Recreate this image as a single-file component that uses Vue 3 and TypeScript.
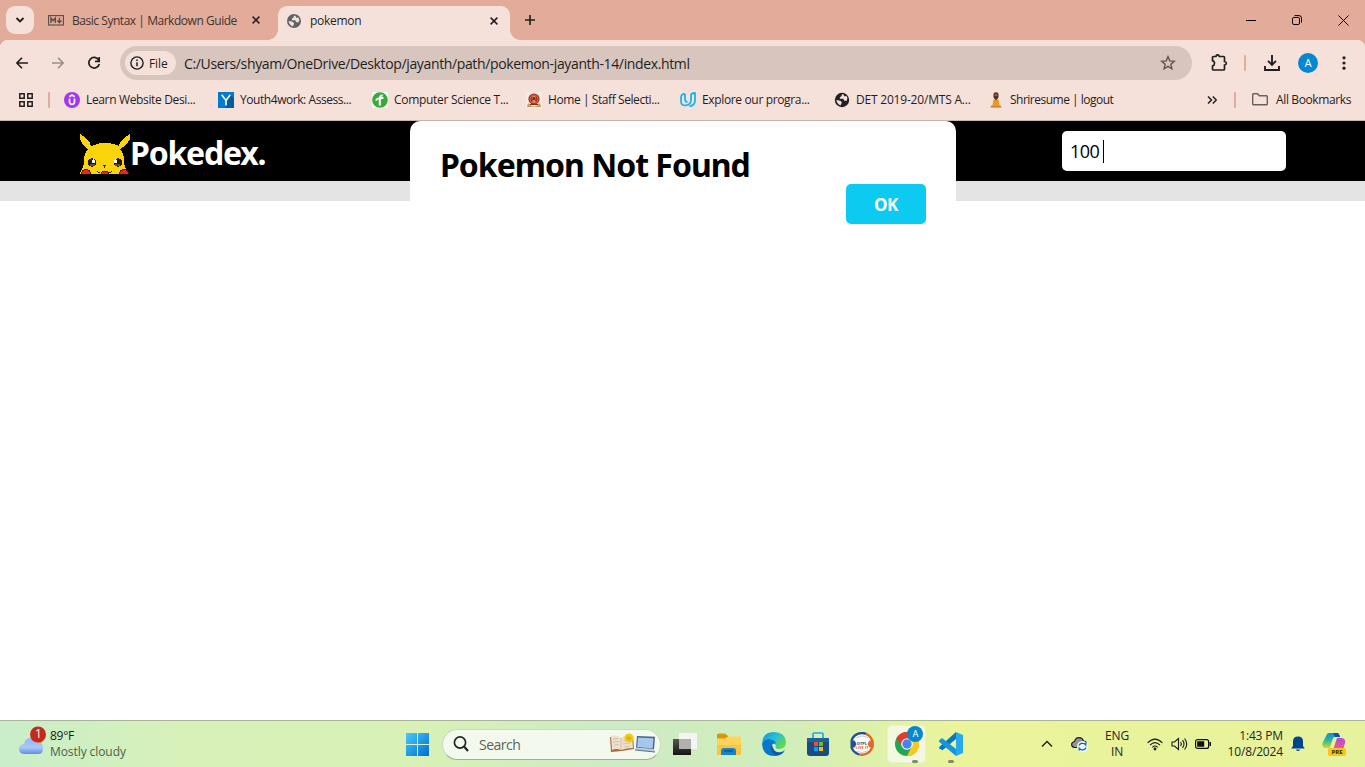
<script setup lang="ts">
interface Bookmark {
  icon: string
  label: string
}

const bookmarks: Bookmark[] = [
  { icon: 'udemy', label: 'Learn Website Desi...' },
  { icon: 'youth', label: 'Youth4work: Assess...' },
  { icon: 'science', label: 'Computer Science T...' },
  { icon: 'staff', label: 'Home | Staff Selecti...' },
  { icon: 'udacity', label: 'Explore our progra...' },
  { icon: 'globe', label: 'DET 2019-20/MTS A...' },
  { icon: 'shri', label: 'Shriresume | logout' },
]
</script>

<template>
  <div class="screen">
    <header class="tabs">
      <button class="tab-search">
        <svg width="10" height="8" viewBox="0 0 10 8"><path d="M1.5 2l3.5 3.5L8.500 2" fill="none" stroke="#1f1f1f" stroke-width="1.8" /></svg>
      </button>
      <div class="tab idle">
        <svg width="16" height="11" viewBox="0 0 16 11">
          <rect x=".6" y=".6" width="14.800" height="9.400" fill="none" stroke="#5a4b47" stroke-width="1.1" />
          <path d="M3 8V3l2.200 2.600L7.400 3v5M11.400 2.800v4.600M9.400 5.500l2 2.200 2-2.200" fill="none" stroke="#5a4b47" stroke-width="1.4" />
        </svg>
        <span class="tab-text t1">Basic Syntax | Markdown Guide</span>
        <svg class="x x1" width="8" height="8" viewBox="0 0 8 8"><path d="M.6.6l6.800 6.800M7.400.6L.6 7.400" stroke="#1f1f1f" stroke-width="1.500" /></svg>
      </div>
      <div class="tab active">
        <svg width="14" height="14" viewBox="0 0 14 14">
          <circle cx="7" cy="7" r="7" fill="#5f6368" />
          <path d="M8.200 1.600Q6 2 6.600 3.600L4.800 4.800v1.400h3.400l1.200 2h2.200q1.400-3-.4-5L9.500 4zM1.600 7l4 .8 1.600 1.600-1.400 3Q2 11 1.600 7z" fill="#f6e0da" />
        </svg>
        <span class="tab-text t2">pokemon</span>
        <svg class="x x2" width="8" height="8" viewBox="0 0 8 8"><path d="M.6.6l6.800 6.800M7.400.6L.6 7.400" stroke="#1f1f1f" stroke-width="1.500" /></svg>
      </div>
      <svg class="plus" width="10" height="10" viewBox="0 0 10 10"><path d="M0 5h10M5 0v10" stroke="#1f1f1f" stroke-width="1.600" /></svg>
      <div class="window-buttons">
        <span><svg width="10" height="10" viewBox="0 0 10 10"><path d="M0 5.500h10" stroke="#000" /></svg></span>
        <span><svg width="10" height="10" viewBox="0 0 10 10"><g fill="none" stroke="#000"><rect x=".5" y="2.500" width="7" height="7" rx="1.400" /><path d="M2.500.6h4.500q2.500 0 2.500 2.500v4.500" /></g></svg></span>
        <span><svg width="11" height="11" viewBox="0 0 11 11"><path d="M.5.5l10 10M10.500.5l-10 10" stroke="#000" /></svg></span>
      </div>
    </header>

    <div class="toolbar">
      <svg class="back" width="12" height="12" viewBox="0 0 12 12"><path d="M6 .8L.9 6 6 11.200M1 6h11" fill="none" stroke="#1f1f1f" stroke-width="1.600" /></svg>
      <svg class="forward" width="12" height="12" viewBox="0 0 12 12"><path d="M6 .8L11.100 6 6 11.200M11 6H0" fill="none" stroke="#998d89" stroke-width="1.600" /></svg>
      <svg class="reload" width="14" height="14" viewBox="0 0 14 14"><path d="M11.700 4A5.300 5.300 0 1 0 12.300 8M12.200 1v4.300H8" fill="none" stroke="#1f1f1f" stroke-width="1.700" /></svg>
      <div class="omnibox">
        <div class="file-chip">
          <svg width="14" height="14" viewBox="0 0 14 14"><circle cx="7" cy="7" r="6.100" fill="none" stroke="#1f1f1f" stroke-width="1.400" /><path d="M7 6.200v4M7 3.500v1.500" stroke="#1f1f1f" stroke-width="1.500" /></svg>
          <span>File</span>
        </div>
        <span class="url">C:/Users/shyam/OneDrive/Desktop/jayanth/path/pokemon-jayanth-14/index.html</span>
        <svg class="star" width="16" height="16" viewBox="0 0 16 16"><path d="M8 1.700l1.800 4.200 4.500.4-3.400 3 1 4.500L8 11.400l-3.900 2.400 1-4.500-3.400-3 4.500-.4z" fill="none" stroke="#5d5552" stroke-width="1.400" /></svg>
      </div>
      <svg class="puzzle" width="18" height="18" viewBox="0 0 18 18"><path d="M2.500 3.500q0-1 1-1H6q.2-1.700 1.600-1.700T9.300 2.500h4.200q1 0 1 1v4q1.800.2 1.800 1.700T14.500 11v4q0 1-1 1h-10q-1 0-1-1v-3q2-.5 2-2.700t-2-2.600z" fill="none" stroke="#1f1f1f" stroke-width="1.700" /></svg>
      <i class="divider first" />
      <svg class="download" width="16" height="16" viewBox="0 0 16 16"><path d="M8 0v9.500M4 5.800l4 4 4-4M1 11v4h14v-4" fill="none" stroke="#1f1f1f" stroke-width="1.900" /></svg>
      <span class="avatar">A</span>
      <svg class="more" width="4" height="14" viewBox="0 0 4 14"><g fill="#1f1f1f"><circle cx="2" cy="1.800" r="1.600" /><circle cx="2" cy="7" r="1.600" /><circle cx="2" cy="12.200" r="1.600" /></g></svg>
    </div>

    <nav class="bookmarks">
      <svg class="apps" width="14" height="14" viewBox="0 0 14 14"><path d="M.8.8h4.400v4.400H.8zM8.800.8h4.400v4.400H8.800zM.8 8.800h4.400v4.400H.8zM8.800 8.800h4.400v4.400H8.800z" fill="none" stroke="#1f1f1f" stroke-width="1.500" /></svg>
      <i class="divider bar" />
      <div v-for="b in bookmarks" :key="b.icon" class="bookmark">
        <svg width="16" height="16" viewBox="0 0 16 16">
          <template v-if="b.icon === 'udemy'"><circle cx="8" cy="8" r="8" fill="#a435f0" /><path d="M5.200 4.700L8 3l2.800 1.700M5.500 6.500v3.200q0 2.600 2.500 2.600t2.500-2.600V6.500" fill="none" stroke="#fff" stroke-width="1.700" /></template>
          <template v-else-if="b.icon === 'youth'"><path d="M0 0h16v16H0z" fill="#007ad0" /><path d="M12.500 2.500L16 6v10H7.500V13z" fill="#075b9a" /><path d="M3.700 2.800L8 8.500l4.300-5.700M8 8v5.500" fill="none" stroke="#fff" stroke-width="1.600" /></template>
          <template v-else-if="b.icon === 'science'"><path d="M0 0h16v16H0z" fill="#f9f4ef" /><circle cx="8" cy="8" r="7.800" fill="#38aa3d" /><path d="M4 8.500q1-2.700 7.500-2.500M10.800 3.500Q7.800 3 7.800 7v6.500" fill="none" stroke="#fff" stroke-width="2" /></template>
          <template v-else-if="b.icon === 'staff'"><path d="M0 0h16v16H0z" fill="#f7eadf" /><path d="M2 11q6 7 12 0l1 4H1z" fill="#b2a05a" /><circle cx="8" cy="7" r="5.600" fill="#b22a2c" /><circle cx="8" cy="7" r="4" fill="none" stroke="#c77d50" stroke-width=".8" /><path d="M6.500 4h3v2L9 9l1.500 1.500h-5L7 9l-.5-3z" fill="#d59855" /><path d="M7 5h2v3H7zM4 12h8v1H4z" fill="#8e2625" /></template>
          <template v-else-if="b.icon === 'udacity'"><path d="M5 1.900Q1 2 1 6v3q0 5 5 4.300Q11 12.600 11 8V3q0-1.700 4-2v7.500q0 5-5.500 5.800M5 1.900V7q0 2.800 2.500 3.200" fill="none" stroke="#16b5ea" stroke-width="1.800" stroke-linejoin="round" /></template>
          <template v-else-if="b.icon === 'globe'"><circle cx="8" cy="8" r="7.200" fill="#202124" /><path d="M9.200 2Q7 2.500 7.600 4L5.800 5.500v1.300h3.400l1.200 2h2.400q1.400-3-.4-5L10.500 4.500zM2.300 8l4 .8 1.600 1.600-1.400 3Q3 12 2.300 8z" fill="#f6e0da" /></template>
          <template v-else><path d="M5.500 7.500h5l1 5.500 2 1v1.300H2.500V14l2-1z" fill="#ed9820" /><path d="M5.500 3Q5.300.2 8 .2T10.500 3v2.500L8 8.500 5.500 5.500z" fill="#51322a" /><path d="M6.700 2.200h2.600v1.600H6.700z" fill="#ae674a" /><path d="M3 15h10" stroke="#8b7165" stroke-width=".8" /></template>
        </svg>
        <span :class="['label', b.icon]">{{ b.label }}</span>
      </div>
      <svg class="chevrons" width="10" height="8" viewBox="0 0 10 8"><path d="M1 .5L4.500 4 1 7.500M5.800.5L9.300 4 5.800 7.500" fill="none" stroke="#1f1f1f" stroke-width="1.500" /></svg>
      <i class="divider last" />
      <svg class="folder" width="16" height="13" viewBox="0 0 16 13"><path d="M.7 11V1.500q0-.8.8-.8h4l1.800 2h7.200q.8 0 .8.800V11q0 .8-.8.800h-13q-.8 0-.8-.8z" fill="none" stroke="#66605e" stroke-width="1.400" /></svg>
      <span class="all">All Bookmarks</span>
    </nav>

    <main class="page">
      <div class="navbar">
        <div class="brand">
          <svg width="50" height="40" viewBox="0 0 50 40" shape-rendering="crispEdges">
            <path d="M0 0l3 2 4 3 3 4 1 3 3-1 3-1 4-1h8l4 1 3 1 3 1 1-3 3-4 4-3 3-2v5l-3 5-4 3-3 2 2 3 2 5v6l1 4 2 4 1 3v1H0v-1l1-3 2-4 1-4v-6l2-5 2-3-3-2-3-4-2-4z" fill="#fbd40b" />
            <circle cx="12" cy="28.500" r="4.200" fill="#261a17" /><circle cx="38" cy="28.500" r="4.200" fill="#261a17" />
            <path d="M10 30h5v2h-5zM35 30h5v2h-5z" fill="#6d4c36" />
            <circle cx="13.600" cy="27.200" r="1.900" fill="#fff" /><circle cx="35.400" cy="27.200" r="1.900" fill="#fff" />
            <path d="M23 31h3v1h-1v2h-1v-2h-1zM17 37h1v1h2v1h-2v-1h-1zM31 37h1v1h-1v1h-2v-1h2z" fill="#222" />
            <circle cx="6" cy="40" r="5" fill="#4d1411" /><circle cx="44" cy="40" r="5" fill="#4d1411" />
            <circle cx="6" cy="40" r="4.300" fill="#eb2525" /><circle cx="44" cy="40" r="4.300" fill="#eb2525" />
            <ellipse cx="25" cy="40" rx="4.500" ry="3" fill="#4d1411" /><ellipse cx="25" cy="40" rx="3.600" ry="2.200" fill="#eb2525" />
          </svg>
          <h1>Pokedex.</h1>
        </div>
        <div class="search-input"><span>100</span><i class="caret" /></div>
      </div>
      <div class="strip" />
      <section class="dialog">
        <h2>Pokemon Not Found</h2>
        <button>OK</button>
      </section>
    </main>

    <footer class="taskbar">
      <div class="weather">
        <svg width="32" height="32" viewBox="0 0 32 32">
          <defs><linearGradient id="cloud" x2="0" y2="1"><stop stop-color="#93b9f7" /><stop offset=".6" stop-color="#a8c6fa" /><stop offset="1" stop-color="#628ce3" /></linearGradient></defs>
          <circle cx="20" cy="14" r="4.500" fill="#f29b1e" />
          <path d="M7 28q-6 0-6-5 0-4 5-5 1-6 6.500-6t7.500 5q5-1 5 5.500Q25 28 20 28z" fill="url(#cloud)" />
          <circle cx="20" cy="8.500" r="8" fill="#c42b1c" />
        </svg>
        <span class="badge">1</span>
        <div class="weather-text"><span>89°F</span><span class="muted">Mostly cloudy</span></div>
      </div>

      <svg class="windows" width="23" height="23" viewBox="0 0 23 23">
        <defs><linearGradient id="win" x2="1" y2="1"><stop stop-color="#48cafa" /><stop offset="1" stop-color="#006dce" /></linearGradient></defs>
        <path d="M0 0h11v11H0zM12 0h11v11H12zM0 12h11v11H0zM12 12h11v11H12z" fill="url(#win)" />
      </svg>

      <div class="search">
        <svg width="16" height="16" viewBox="0 0 16 16"><circle cx="7" cy="6.500" r="5.600" fill="none" stroke="#242424" stroke-width="1.700" /><path d="M11 10.500l4 4.500" stroke="#242424" stroke-width="2.200" /></svg>
        <span>Search</span>
        <svg class="art" width="48" height="22" viewBox="0 0 48 22">
          <path d="M1 4l11 1 12-2 1 13-12 2-11 1z" fill="#a9683f" /><path d="M2 3q6-2 10 2v12q-5-2-9 0zM12 5q5-4 11-2l1 12q-6 0-12 2z" fill="#efe0cd" /><path d="M4 6l5-.5M4 9l6-.4M5 12l5-.4M14 8l5-1M14 11l7-1M15 14l6-1M12 5v12" stroke="#c9b9a5" stroke-width=".8" />
          <circle cx="20" cy="5" r="4.600" fill="#f4cc0b" /><path d="M17 5l2-2 4 2-3 3z" fill="#dfb406" />
          <path d="M28 3l18 .7-1 13-18-2z" fill="#4b6084" /><path d="M29 4.500l15.500.7-.8 10.200L28.200 14z" fill="#a5c8ef" /><path d="M27 14.500l18 1.500 1 3-20-2z" fill="#b9cad8" /><path d="M26 17l20 2" stroke="#58718f" />
        </svg>
      </div>

      <div class="dock">
        <div class="app">
          <svg width="24" height="24" viewBox="0 0 24 24"><defs><linearGradient id="desk" x2="0" y2="1"><stop stop-color="#555" /><stop offset="1" stop-color="#151515" /></linearGradient></defs><path d="M0 7h18v16H0z" fill="url(#desk)" /><path d="M6 1h18v16H6z" fill="#f4f4f4" /><path d="M6 7h12v10H6z" fill="#b0b0ad" /></svg>
        </div>
        <div class="app">
          <svg width="26" height="24" viewBox="0 0 26 24"><path d="M1 3q0-1.500 1.500-1.500H9L12 4v4H1z" fill="#d59a0c" /><path d="M1 6.500h8L12 4.500h11.500q1.500 0 1.500 1.500v17H1z" fill="#ffd35a" /><path d="M1 13h24v10H1z" fill="#f6be32" opacity=".6" /><path d="M5 23v-4q0-3 3-3h9q3 0 3 3v4z" fill="#1684cb" /><path d="M8 19h9" stroke="#075996" stroke-width="1.500" /></svg>
        </div>
        <div class="app">
          <svg width="24" height="24" viewBox="0 0 24 24"><defs><linearGradient id="edge" x2="1" y2=".7"><stop stop-color="#1390d9" /><stop offset=".5" stop-color="#28bedb" /><stop offset="1" stop-color="#66db42" /></linearGradient></defs><path d="M0 11Q1 0 12 0q11 0 12 10 0 7-7 7-5 0-3-3Q14 7 7 7 2 7 0 11z" fill="url(#edge)" /><path d="M0 12q1-5 7-5 7 0 7 6-2-3-4 0-1 6 5 7 4 1 8-2-3 6-11 6Q1 24 0 12z" fill="#0877ca" /><path d="M10 13q-3 5 2 9 5 3 10-2-10 3-12-7z" fill="#1356a0" /></svg>
        </div>
        <div class="app">
          <svg width="24" height="24" viewBox="0 0 24 24"><path d="M7 6V2q0-1 1-1h8q1 0 1 1v4" fill="none" stroke="#23aae9" stroke-width="1.700" /><path d="M1 6h22v15q0 3-3 3H4q-3 0-3-3z" fill="#194c83" /><path d="M1 6h22v4H1z" fill="#1d629a" /><path d="M8 10h4v4H8z" fill="#f25022" /><path d="M13 10h4v4h-4z" fill="#7fba00" /><path d="M8 15h4v4H8z" fill="#00a4ef" /><path d="M13 15h4v4h-4z" fill="#ffb900" /></svg>
        </div>
        <div class="app">
          <svg width="24" height="24" viewBox="0 0 24 24"><circle cx="12" cy="12" r="10" fill="#fff" /><path d="M16 1.900A10.800 10.800 0 0 0 1.500 9M1.400 15A10.800 10.800 0 0 0 9 22.300" fill="none" stroke="#254f91" stroke-width="2.400" /><path d="M16 1.900A10.800 10.800 0 0 1 9 22.300" fill="none" stroke="#df6b28" stroke-width="2.400" /><path d="M.5 8.500h4l2 3.500-2 3.500h-4z" fill="#254f91" /><path d="M23.500 8.500h-4l-2 3.500 2 3.500h4z" fill="#df6b28" /><path d="M6 6q6-4 12 0M6 19q6 3 12 0" fill="none" stroke="#c4ccd5" /><text x="12" y="13" class="mini" fill="#29477a">DTPL</text><text x="12" y="17" class="mini" fill="#d96731">LIVE IT</text></svg>
        </div>
        <div class="app selected">
          <svg width="24" height="24" viewBox="0 0 24 24"><circle cx="12" cy="12" r="12" fill="#22a650" /><path d="M1.600 6A12 12 0 0 1 24 10H12L7 15z" fill="#e33b2e" /><path d="M24 10a12 12 0 0 1-12 14l5-10-1-5h8z" fill="#fbc91b" /><circle cx="12" cy="12" r="5.800" fill="#fff" /><circle cx="12" cy="12" r="4.700" fill="#4285f4" /></svg>
          <span class="profile">A</span><i class="indicator" />
        </div>
        <div class="app vscode">
          <svg width="24" height="24" viewBox="0 0 24 24"><path d="M17 0v7L3.500 18.200.2 16.400v-1.500z" fill="#0879bf" /><path d="M0 8.500L3 6l14 11v7L0 9.800z" fill="#1595db" /><path d="M17 0l7 3v18l-7 3z" fill="#28a8ed" /></svg>
          <i class="indicator" />
        </div>
      </div>

      <svg class="up" width="12" height="8" viewBox="0 0 12 8"><path d="M1 6.500l5-5 5 5" fill="none" stroke="#1b1b1b" stroke-width="1.300" /></svg>
      <svg class="sync" width="17" height="15" viewBox="0 0 17 15"><path d="M3.500 10.500Q.6 10 .6 7.500t3-3Q4.500.7 8 .7t4.500 3.400q3 .1 3 3.400v3z" fill="#929394" stroke="#202020" stroke-width="1.200" /><circle cx="11.500" cy="9.500" r="5.500" fill="#f4fafb" /><path d="M8 8.600q1-2.600 3.500-2.400 2 0 3.200 1.600V5.500M15 10.500q-1 2.600-3.500 2.400-2 0-3.200-1.600v2.300" fill="none" stroke="#0969bd" stroke-width="1.400" /></svg>
      <div class="language"><span>ENG</span><span>IN</span></div>
      <svg class="wifi" width="16" height="13" viewBox="0 0 16 13"><g fill="none" stroke="#1b1b1b" stroke-width="1.100"><path d="M.6 4.800q7.400-7.400 14.800 0M3 7.100q5-5 10 0M5.300 9.300q2.700-2.600 5.400 0" /></g><circle cx="8" cy="11" r="1.400" fill="#1b1b1b" /></svg>
      <svg class="volume" width="17" height="14" viewBox="0 0 17 14"><path d="M1 5h2.500L7.500 1.500v11L3.500 9H1zM9.500 5q1.600 2 0 4M11.500 3.200q3 3.800 0 7.600M13.500 1.500q4.500 5.500 0 11" fill="none" stroke="#1b1b1b" stroke-width="1.100" /></svg>
      <svg class="battery" width="17" height="10" viewBox="0 0 17 10"><rect x=".6" y=".6" width="13" height="8.800" rx="2" fill="none" stroke="#111" stroke-width="1.200" /><path d="M2.200 2.200h7v5.600h-7zM14.500 3H16v4h-1.500z" fill="#111" /></svg>
      <div class="clock"><span>1:43 PM</span><span>10/8/2024</span></div>
      <svg class="bell" width="14" height="16" viewBox="0 0 14 16"><path d="M2 10V5.500Q2 .5 7 .5t5 5V10l1.800 2.600H.2zM5 13.500h4Q8.500 15 7 15t-2-1.500z" fill="#00438f" /></svg>
      <div class="copilot">
        <svg width="24" height="24" viewBox="0 0 24 24">
          <defs><linearGradient id="copilotLeft" x2="0" y2="1"><stop stop-color="#158bdc" /><stop offset=".5" stop-color="#30b998" /><stop offset="1" stop-color="#d8d62b" /></linearGradient><linearGradient id="copilotRight" x2="0" y2="1"><stop stop-color="#a94fe1" /><stop offset=".6" stop-color="#e95595" /><stop offset="1" stop-color="#f58858" /></linearGradient></defs>
          <path d="M7 1h8q2 0 3 4h-5q-2 0-3 4l-2 7H3q-4-1-2-6L4 4q1-3 3-3z" fill="url(#copilotLeft)" /><path d="M11 1h4q2 0 3 4h-5z" fill="#174caf" /><path d="M15 6h5q4 1 3 5l-2 7q-1 3-4 3H8q3-1 4-6z" fill="url(#copilotRight)" />
        </svg>
        <span>PRE</span>
      </div>
    </footer>
  </div>
</template>

<style>
html, body { margin: 0; overflow: hidden; }
</style>

<style scoped>
* { box-sizing: border-box; }
.screen { display: flex; flex-direction: column; width: 1365px; height: 767px; overflow: hidden; background: #fff; color: #1f1f1f; font-family: "Open Sans", "Noto Sans", sans-serif; font-size: 12px; white-space: nowrap; }
svg { display: block; flex: none; }
button { border: 0; padding: 0; font-family: inherit; }
.tabs { display: flex; height: 40px; align-items: center; background: #e3ab9a; flex: none; }
.tab-search { display: flex; align-items: center; justify-content: center; width: 28px; height: 28px; margin-left: 6px; border-radius: 9px; background: #f6e0da; }
.tab { display: flex; align-items: center; flex: none; }
.idle { width: 244px; padding-left: 14px; color: #403532; }
.tab-text { margin-left: 8px; font-size: 12px; line-height: 18px; }
.t1 { width: 165px; padding-top: 1px; letter-spacing: -.46px; }
.t2 { width: 180px; margin-left: 9px; letter-spacing: -.3px; }
.x1 { margin-left: 15px; }
.x2 { margin-left: 0; }
.active { position: relative; align-self: flex-end; width: 232px; height: 34px; padding: 0 0 5px 9px; border-radius: 9px 9px 0 0; background: #f6e0da; }
.active::before, .active::after { position: absolute; bottom: 0; width: 10px; height: 10px; content: ""; }
.active::before { left: -10px; background: radial-gradient(circle at 0 0, transparent 9.500px, #f6e0da 10px); }
.active::after { right: -10px; background: radial-gradient(circle at 100% 0, transparent 9.500px, #f6e0da 10px); }
.plus { margin-left: 15px; }
.window-buttons { display: flex; margin-left: auto; margin-right: -1px; }
.window-buttons span { display: flex; justify-content: center; align-items: center; width: 46px; }
.toolbar { display: flex; align-items: center; height: 46px; background: radial-gradient(circle at 8px 8px, #f6e0da 8px, transparent 8.500px) 0 0 / 8px 8px no-repeat, radial-gradient(circle at 0 8px, #f6e0da 8px, transparent 8.500px) 100% 0 / 8px 8px no-repeat, linear-gradient(#f6e0da, #f6e0da) 8px 0 / 1349px 8px no-repeat, linear-gradient(#f6e0da, #f6e0da) 0 8px / 100% 38px no-repeat, #e3ab9a; flex: none; }
.back { margin-left: 16px; }
.forward { margin-left: 24px; }
.reload { margin-left: 23px; }
.omnibox { display: flex; align-items: center; width: 1072px; height: 34px; margin-left: 19px; padding: 0 16px 0 5px; border-radius: 17px; background: #d8c5be; }
.file-chip { display: flex; align-items: center; width: 51px; height: 24px; padding-left: 5px; border-radius: 12px; background: #f6e0da; }
.file-chip span { margin-left: 5px; font-size: 12px; font-weight: 500; letter-spacing: -.1px; }
.url { margin-left: 8px; font-size: 14px; letter-spacing: -.365px; }
.star { margin-left: auto; }
.puzzle { margin-left: 18px; }
.divider { width: 2px; height: 16px; border-radius: 1px; background: #e3ab9a; flex: none; }
.first { margin-left: 16px; }
.download { margin-left: 18px; }
.avatar { display: flex; align-items: center; justify-content: center; width: 20px; height: 20px; margin-left: 18px; border-radius: 50%; background: #0288d1; color: #fff; font: 11px Roboto, sans-serif; }
.more { margin-left: 24px; }
.bookmarks { display: flex; align-items: center; height: 35px; padding-bottom: 7px; border-bottom: 1px solid #c7b5af; background: #f6e0da; flex: none; }
.apps { margin-left: 19px; }
.bar { margin: 0 14px 0 15px; }
.bookmark { display: flex; align-items: center; width: 154px; flex: none; }
.label { margin-left: 6px; font-size: 12px; line-height: 16px; letter-spacing: -.35px; }
.youth { letter-spacing: -.44px; }
.science { letter-spacing: -.3px; }
.staff { letter-spacing: -.42px; }
.globe { letter-spacing: -.2px; }
.shri { letter-spacing: -.5px; }
.chevrons { margin-left: 65px; }
.last { margin-left: 17px; }
.folder { margin-left: 16px; }
.all { margin-left: 8px; letter-spacing: -.37px; }
.page { position: relative; height: 599px; background: #fff; flex: none; }
.navbar { display: flex; align-items: center; justify-content: space-between; height: 60px; padding: 0 79px 0 80px; background: #000; }
.brand { display: flex; align-items: center; }
.brand svg { margin-top: 6px; }
h1, h2 { margin: 0; font-family: "Noto Sans", sans-serif; font-weight: 700; font-size: 32px; line-height: 42px; }
h1 { color: #fff; letter-spacing: -1.2px; margin-top: 3px; }
.search-input { display: flex; align-items: center; width: 224px; height: 40px; padding-left: 8px; border-radius: 5px; background: #fff; color: #000; font-size: 18px; letter-spacing: -.6px; }
.caret { width: 1px; height: 23px; margin-left: 4px; background: #000; }
.strip { height: 20px; background: #e4e4e4; }
.dialog { position: absolute; top: 0; left: 410px; display: flex; flex-direction: column; width: 546px; height: 133px; padding: 22px 30px 30px; border-radius: 10px; background: #fff; color: #000; }
.dialog h2 { height: 41px; padding-top: 1px; letter-spacing: -1px; }
.dialog button { align-self: flex-end; width: 80px; height: 40px; border-radius: 5px; background: #0dcaf0; color: #fff; font-size: 17px; font-weight: 700; letter-spacing: -.5px; }
.taskbar { display: flex; align-items: center; height: 47px; border-top: 1px solid #a9b598; background: linear-gradient(90deg, #c9eec9 0, #d7f1b9 13%, #d9f1b6 30%, #cdebc5 45%, #d2eeb9 58%, #ebf49b 70%, #e6f29c 100%); flex: none; }
.weather { position: relative; display: flex; align-items: center; width: 200px; padding-left: 18px; }
.weather svg { margin-top: -5px; }
.badge { position: absolute; top: -2px; left: 34px; width: 9px; color: #fff; font-size: 12px; line-height: 16px; text-align: center; }
.weather-text { display: flex; flex-direction: column; color: #171c15; font-size: 12px; line-height: 16px; letter-spacing: -.25px; }
.weather-text .muted { color: #4f5e4a; letter-spacing: -.08px; }
.windows { margin-left: 206px; }
.search { display: flex; align-items: center; width: 219px; height: 31px; margin-left: 13px; padding-left: 10px; border: 1px solid #cad9c1; border-bottom-color: #9eae98; border-radius: 16px; background: #f3faed; color: #5b625a; font-size: 14px; letter-spacing: -.5px; }
.search span { margin-left: 10px; }
.search .art { margin-left: auto; margin-right: 3px; }
.dock { display: flex; width: 312px; height: 40px; padding-left: 2px; }
.app { position: relative; display: flex; align-items: center; justify-content: center; width: 44.300px; height: 40px; flex: none; }
.selected::before { position: absolute; inset: 1px 3px; border: 1px solid #e9efd6; border-radius: 4px; background: #f3f8df; content: ""; }
.selected svg { position: relative; }
.profile { position: absolute; top: 2px; left: 23px; display: flex; align-items: center; justify-content: center; width: 16px; height: 16px; border-radius: 50%; background: #0788ce; color: #fff; font: 9px Roboto, sans-serif; }
.indicator { position: absolute; bottom: 1px; left: 19px; width: 6px; height: 3px; border-radius: 2px; background: #828b6d; }
.selected .indicator { left: 28px; }
.mini { font: 700 4px "Open Sans", sans-serif; text-anchor: middle; }
.up { margin-left: 68px; }
.sync { margin-left: 18px; }
.language { display: flex; flex-direction: column; align-items: center; width: 30px; margin-left: 14px; line-height: 16px; letter-spacing: -.2px; }
.wifi { margin-left: 15px; }
.volume { margin-left: 8px; }
.battery { margin-left: 7px; }
.clock { display: flex; flex-direction: column; align-items: flex-end; width: 71px; line-height: 16px; letter-spacing: -.15px; }
.bell { margin-left: 8px; }
.copilot { position: relative; margin-left: 17px; }
.copilot span { position: absolute; right: 0; bottom: 0; width: 18px; height: 8px; border-radius: 2px; background: #f9c711; color: #211f0e; font-size: 6px; font-weight: 700; line-height: 8px; text-align: center; }
</style>
